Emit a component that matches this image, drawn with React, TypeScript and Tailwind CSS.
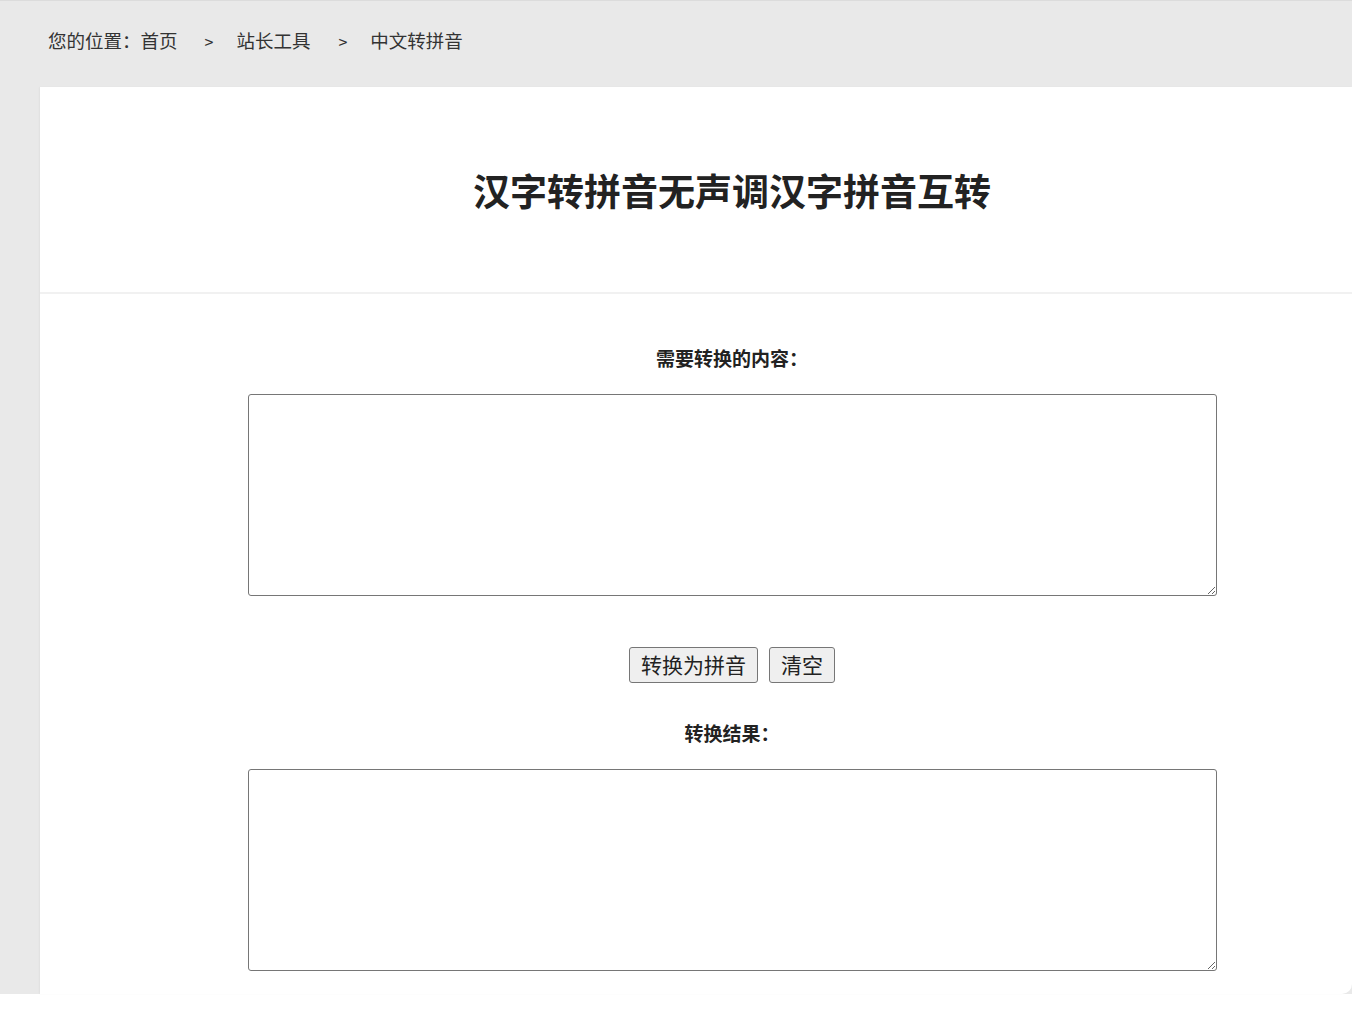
import React, { useState } from "react";

const cjk = { fontFamily: '"Microsoft YaHei", "Noto Sans CJK SC", "Noto Sans", sans-serif' };

export default function App() {
  const [input, setInput] = useState("");
  const [output, setOutput] = useState("");

  return (
    <div className="min-h-[1018px] bg-white text-[#333]" style={cjk}>
      <div className="bg-[#e9e9e9] h-[994px] flex flex-col">
        {/* breadcrumb */}
        <div className="h-[87px] flex items-center pl-[48px] pb-[6px] text-[18.5px] text-[#333] border-t border-[#dcdcdc]">
          <span>您的位置：首页</span>
          <span className="ml-[27px] mr-[23px] text-[16px]">&gt;</span>
          <span>站长工具</span>
          <span className="ml-[28px] mr-[23px] text-[16px]">&gt;</span>
          <span>中文转拼音</span>
        </div>

        {/* tool card */}
        <div className="ml-[40px] flex-1 bg-white rounded-br-[10px] shadow-[-1px_0_2px_rgba(0,0,0,0.04)] flex flex-col pl-[72px]">
          <div className="h-[207px] flex items-center justify-center pt-[2px] border-b-2 border-[#f1f1f1] -ml-[72px] pl-[72px]">
            <h1 className="text-[37px] font-bold text-[#222]">汉字转拼音无声调汉字拼音互转</h1>
          </div>

          <div className="flex flex-col items-center">
            <label className="mt-[50px] text-[19px] font-bold text-[#222]">需要转换的内容：</label>
            <textarea
              value={input}
              onChange={(e) => setInput(e.target.value)}
              className="mt-[21px] w-[969px] h-[202px] border border-[#767676] rounded-[3px] bg-white outline-none resize"
            />
            <div className="mt-[51px] flex gap-[11px]">
              <button
                onClick={() => setOutput(input)}
                className="h-[36px] px-[11px] text-[21px] text-[#222] bg-[#efefef] border border-[#767676] rounded-[3px]"
              >
                转换为拼音
              </button>
              <button
                onClick={() => {
                  setInput("");
                  setOutput("");
                }}
                className="h-[36px] px-[11px] text-[21px] text-[#222] bg-[#efefef] border border-[#767676] rounded-[3px]"
              >
                清空
              </button>
            </div>
            <label className="mt-[36px] text-[19px] font-bold text-[#222]">转换结果：</label>
            <textarea
              value={output}
              readOnly
              className="mt-[22px] w-[969px] h-[202px] border border-[#767676] rounded-[3px] bg-white outline-none resize"
            />
          </div>
        </div>
      </div>
    </div>
  );
}
